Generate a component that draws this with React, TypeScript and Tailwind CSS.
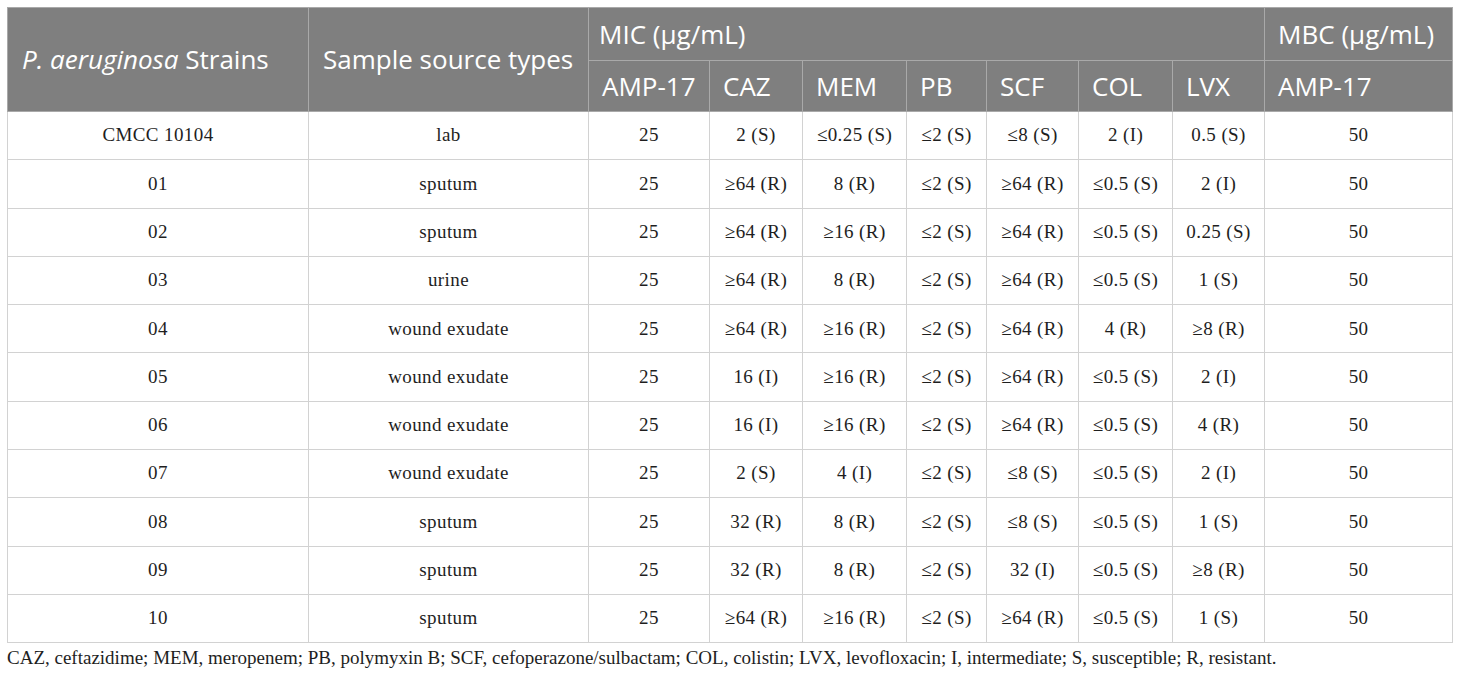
import React from 'react';

const serif = "font-['Liberation_Serif','Times_New_Roman',serif]";
const sans = "font-['Open_Sans','Noto_Sans',sans-serif]";

const rows: string[][] = [
  ['CMCC 10104', 'lab', '25', '2 (S)', '≤0.25 (S)', '≤2 (S)', '≤8 (S)', '2 (I)', '0.5 (S)', '50'],
  ['01', 'sputum', '25', '≥64 (R)', '8 (R)', '≤2 (S)', '≥64 (R)', '≤0.5 (S)', '2 (I)', '50'],
  ['02', 'sputum', '25', '≥64 (R)', '≥16 (R)', '≤2 (S)', '≥64 (R)', '≤0.5 (S)', '0.25 (S)', '50'],
  ['03', 'urine', '25', '≥64 (R)', '8 (R)', '≤2 (S)', '≥64 (R)', '≤0.5 (S)', '1 (S)', '50'],
  ['04', 'wound exudate', '25', '≥64 (R)', '≥16 (R)', '≤2 (S)', '≥64 (R)', '4 (R)', '≥8 (R)', '50'],
  ['05', 'wound exudate', '25', '16 (I)', '≥16 (R)', '≤2 (S)', '≥64 (R)', '≤0.5 (S)', '2 (I)', '50'],
  ['06', 'wound exudate', '25', '16 (I)', '≥16 (R)', '≤2 (S)', '≥64 (R)', '≤0.5 (S)', '4 (R)', '50'],
  ['07', 'wound exudate', '25', '2 (S)', '4 (I)', '≤2 (S)', '≤8 (S)', '≤0.5 (S)', '2 (I)', '50'],
  ['08', 'sputum', '25', '32 (R)', '8 (R)', '≤2 (S)', '≤8 (S)', '≤0.5 (S)', '1 (S)', '50'],
  ['09', 'sputum', '25', '32 (R)', '8 (R)', '≤2 (S)', '32 (I)', '≤0.5 (S)', '≥8 (R)', '50'],
  ['10', 'sputum', '25', '≥64 (R)', '≥16 (R)', '≤2 (S)', '≥64 (R)', '≤0.5 (S)', '1 (S)', '50'],
];

const widths = [301, 280, 121, 93, 104, 80, 92, 94, 92, 188];
const drugs = ['AMP-17', 'CAZ', 'MEM', 'PB', 'SCF', 'COL', 'LVX'];

export default function App() {
  return (
    <div className="w-[1460px] h-[680px] bg-white pt-[7px] pl-[7px]">
      <table className="border-collapse table-fixed w-[1445px]">
        <colgroup>
          {widths.map((w, i) => (
            <col key={i} style={{ width: w }} />
          ))}
        </colgroup>
        <thead className={`${sans} text-white text-[26px] bg-[#7f7f7f]`}>
          <tr className="h-[53px]">
            <th rowSpan={2} className="border border-[#a9a9a9] text-left font-normal pl-[14px] whitespace-nowrap">
              <i>P. aeruginosa</i> Strains
            </th>
            <th rowSpan={2} className="border border-[#a9a9a9] text-left font-normal pl-[14px] whitespace-nowrap">
              Sample source types
            </th>
            <th colSpan={7} className="border border-[#a9a9a9] text-left font-normal pl-[10px]">
              MIC (μg/mL)
            </th>
            <th className="border border-[#a9a9a9] text-left font-normal pl-[13px] whitespace-nowrap">MBC (μg/mL)</th>
          </tr>
          <tr className="h-[51px]">
            {drugs.map((d) => (
              <th key={d} className="border border-[#a9a9a9] text-left font-normal pl-[13px] whitespace-nowrap">
                {d}
              </th>
            ))}
            <th className="border border-[#a9a9a9] text-left font-normal pl-[13px]">AMP-17</th>
          </tr>
        </thead>
        <tbody className={`${serif} text-[19px] text-[#1e1e1e]`}>
          {rows.map((r, i) => (
            <tr key={i} className="h-[48.3px]">
              {r.map((c, j) => (
                <td key={j} className="border border-[#d2d2d2] text-center whitespace-nowrap tracking-[0.4px]">
                  {c}
                </td>
              ))}
            </tr>
          ))}
        </tbody>
      </table>
      <p className={`${serif} text-[19px] leading-[28px] text-[#1e1e1e] mt-[1px]`}>
        CAZ, ceftazidime; MEM, meropenem; PB, polymyxin B; SCF, cefoperazone/sulbactam; COL, colistin; LVX, levofloxacin; I, intermediate; S, susceptible; R, resistant.
      </p>
    </div>
  );
}
